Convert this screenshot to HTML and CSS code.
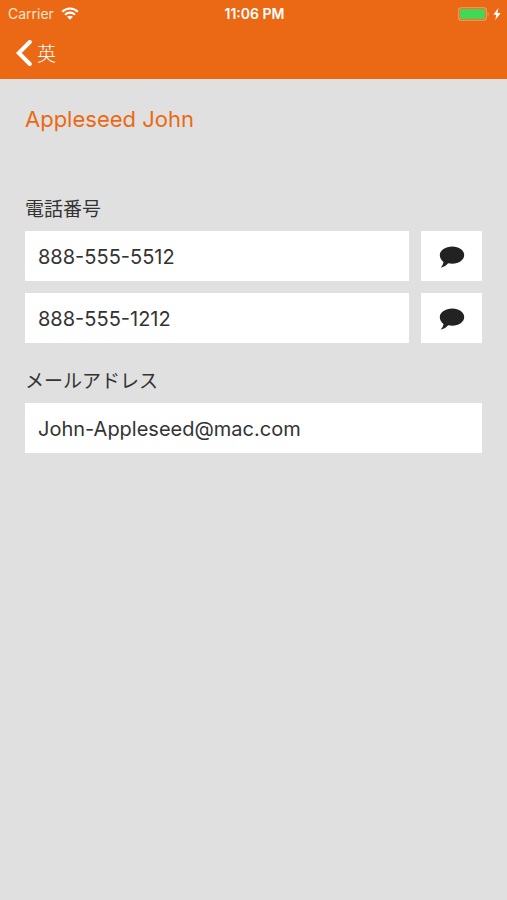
FILE: index.html
```html
<!DOCTYPE html>
<html lang="ja">
<head>
<meta charset="UTF-8">
<meta name="viewport" content="width=device-width, initial-scale=1.0">
<title>Appleseed John</title>
<link rel="stylesheet" href="styles.css">
</head>
<body>

<header class="header">
  <!-- Status bar -->
  <div class="status-bar">
    <div class="status-left">
      <span>Carrier</span>
      <svg class="wifi" viewBox="0 0 18 13" aria-hidden="true">
        <path d="M1.2 4.8C5.6.4 12.4.4 16.8 4.8M4 7.7c2.9-2.8 7.1-2.8 10 0" fill="none" stroke="#fff" stroke-width="2.1"/>
        <path d="M9 12.7 6.1 9.8c1.7-1.5 4.1-1.5 5.8 0z" fill="#fff"/>
      </svg>
    </div>
    <div class="status-time">11:06 PM</div>
    <div class="status-right">
      <svg class="battery" viewBox="0 0 32 14" aria-hidden="true">
        <rect x="0.7" y="0.7" width="27.6" height="12.6" rx="2.5" fill="none" stroke="#f5a06a" stroke-width="1.1"/>
        <rect x="2" y="2" width="25" height="10" rx="1" fill="#42d855"/>
        <path d="M29.6 5c1.6.6 1.6 3.4 0 4z" fill="#f5a06a"/>
      </svg>
      <svg class="bolt" viewBox="0 0 8 12" aria-hidden="true">
        <path d="M5.4 0 .3 6.8h3L2.3 12 7.7 4.9H4.5z" fill="#fff"/>
      </svg>
    </div>
  </div>

  <!-- Navigation -->
  <nav class="nav-bar">
    <button type="button" class="back">
      <svg class="chevron" viewBox="0 0 16 26" aria-hidden="true">
        <path d="M13.8 2 2.8 13l11 11" fill="none" stroke="#fff" stroke-width="4" stroke-linecap="round" stroke-linejoin="miter"/>
      </svg>
      <span>英</span>
    </button>
  </nav>
</header>

<main class="contact">
  <h1 class="name">Appleseed John</h1>

  <section class="group">
    <h2 class="label">電話番号</h2>
    <div class="row">
      <a class="field" href="tel:888-555-5512">888-555-5512</a>
      <a class="message" href="sms:888-555-5512" aria-label="888-555-5512">
        <svg class="bubble" viewBox="0 0 26 22" aria-hidden="true">
          <path d="M13.3.5C20 .5 25.200 4.300 25.200 9.100s-5.200 8.700-11.900 8.700c-1.500 0-2.900-.2-4.200-.5-1.800 2-4.100 3.600-6.700 4.300-.5.100-.7-.3-.3-.7 1.300-1.300 2.100-2.900 2.400-5C2.100 14.200.8 11.800.8 9.100.8 4.300 6.600.5 13.300.5z" fill="#222"/>
        </svg>
      </a>
    </div>
    <div class="row">
      <a class="field" href="tel:888-555-1212">888-555-1212</a>
      <a class="message" href="sms:888-555-1212" aria-label="888-555-1212">
        <svg class="bubble" viewBox="0 0 26 22" aria-hidden="true">
          <path d="M13.3.5C20 .5 25.200 4.300 25.200 9.100s-5.200 8.700-11.900 8.700c-1.500 0-2.900-.2-4.200-.5-1.800 2-4.100 3.600-6.700 4.300-.5.100-.7-.3-.3-.7 1.300-1.300 2.100-2.900 2.400-5C2.100 14.200.8 11.800.8 9.100.8 4.300 6.600.5 13.300.5z" fill="#222"/>
        </svg>
      </a>
    </div>
  </section>

  <section class="group">
    <h2 class="label">メールアドレス</h2>
    <div class="row">
      <a class="field" href="mailto:John-Appleseed@mac.com">John-Appleseed@mac.com</a>
    </div>
  </section>
</main>

</body>
</html>
```

FILE: styles.css
```css
* {
  box-sizing: border-box;
}

body {
  margin: 0;
  min-height: 100vh;
  background-color: #e0e0e0;
  color: #333;
  font-family: Inter, "Noto Sans CJK JP", sans-serif;
}

/* Header */
.header {
  background-color: #eb6914;
  color: #fff;
}

.status-bar {
  display: grid;
  grid-template-columns: 1fr auto 1fr;
  align-items: center;
  height: 27px;
  padding: 0 6px 0 8px;
  font-size: 14px;
}

.status-left,
.status-right {
  display: flex;
  align-items: center;
  gap: 7px;
}

.status-left {
  color: #fde3d0;
}

.status-right {
  justify-content: flex-end;
  gap: 3px;
}

.status-time {
  font-weight: 600;
}

.wifi {
  width: 18px;
  height: 13px;
}

.battery {
  width: 32px;
  height: 14px;
}

.bolt {
  width: 8px;
  height: 12px;
}

.nav-bar {
  display: flex;
  align-items: center;
  height: 52px;
  padding: 0 16px;
}

.back {
  display: flex;
  align-items: center;
  gap: 5px;
  padding: 0;
  border: none;
  background: none;
  color: #fff;
  font-family: "Noto Sans CJK JP", sans-serif;
  font-size: 19px;
  font-weight: 300;
  line-height: 26px;
  cursor: pointer;
}

.chevron {
  width: 16px;
  height: 26px;
}

/* Contact details */
.contact {
  padding: 24px 25px;
}

.name {
  margin: 0 0 60px;
  color: #eb6914;
  font-size: 22px;
  font-weight: 400;
  line-height: 32px;
}

.group {
  margin-bottom: 24px;
}

.label {
  margin: 0 0 10px;
  font-family: "Noto Sans CJK JP", sans-serif;
  font-size: 19px;
  font-weight: 400;
  line-height: 26px;
}

.row {
  display: flex;
  gap: 12px;
}

.row + .row {
  margin-top: 12px;
}

.field,
.message {
  display: flex;
  align-items: center;
  height: 50px;
  padding-top: 2px;
  background-color: #fff;
  color: #333;
  text-decoration: none;
}

.field {
  flex: 1;
  padding-left: 13px;
  padding-right: 13px;
  font-size: 20px;
}

.message {
  justify-content: center;
  width: 61px;
}

.bubble {
  width: 26px;
  height: 22px;
}
```
